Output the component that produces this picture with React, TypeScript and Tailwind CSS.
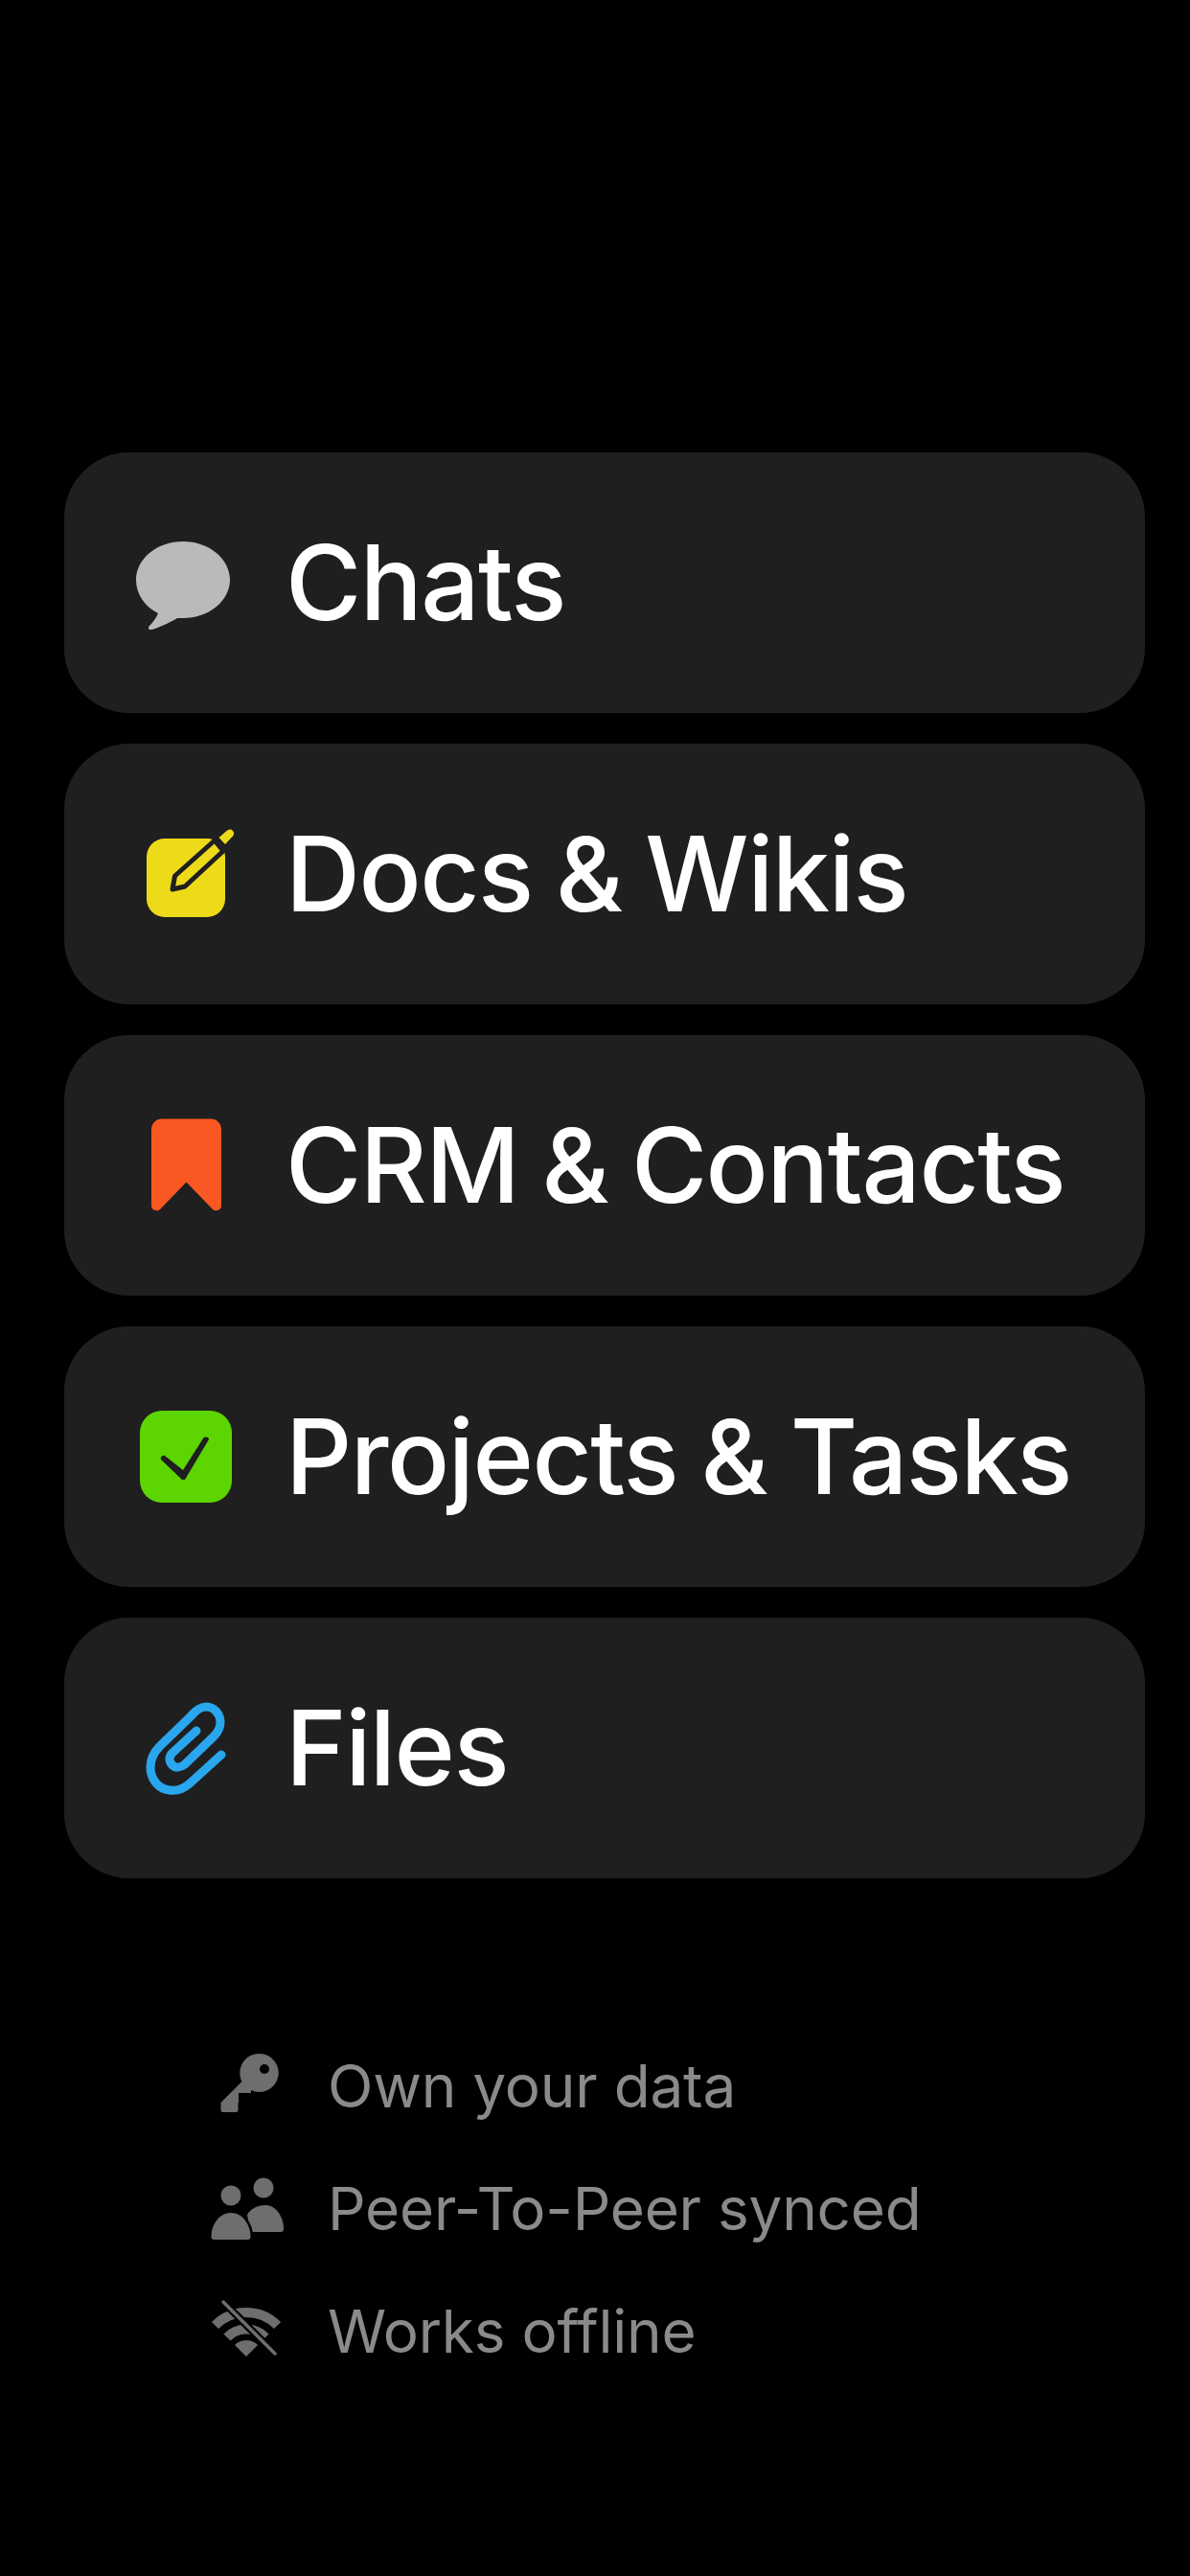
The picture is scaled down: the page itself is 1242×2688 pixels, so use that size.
const ChatIcon = () => (
  <svg viewBox="138 552 112 112" className="w-[112px] h-[112px]">
    <path
      fill="#bababa"
      d="M191 565c27 0 49 18 49 40s-22 40-49 40h-6c-8 5-22 11-27 12-3 .5-4-2-2-4 3-3 7-8 9-13-14-7-23-20-23-35 0-22 22-40 49-40z"
    />
  </svg>
);

const DocIcon = () => (
  <svg viewBox="138 857 112 112" className="w-[112px] h-[112px]">
    <rect x="153" y="876" width="82" height="82" rx="19" fill="#eddb19" />
    <path
      d="M180 929l2.500-14L224 878l9 11-40 37z"
      fill="#eddb19"
      stroke="#1f1f1f"
      strokeWidth="5"
      strokeLinejoin="round"
    />
    <path d="M228.500 875l8-7c3-2 5-2 6.500 0s1.500 3.500 0 5.500l-8 8.500z" fill="#eddb19" />
  </svg>
);

const BookmarkIcon = () => (
  <svg viewBox="138 1161 112 112" className="w-[112px] h-[112px]">
    <path
      fill="#f95823"
      d="M158 1180c0-7 5-11.500 11-11.500h51c6 0 11 4.500 11 11.500v79c0 5-6 6.500-9 4l-27.500-28.500-27.500 28.500c-3 2.500-9 1-9-4z"
    />
  </svg>
);

const CheckIcon = () => (
  <svg viewBox="138 1465 112 112" className="w-[112px] h-[112px]">
    <rect x="146" y="1473" width="96" height="96" rx="23" fill="#5cd500" />
    <path
      fill="#1f1f1f"
      d="M168 1524c-1-2 1-5 4-4l19 15 21-33c1-2 6-2 6 1l-25 42h-3z"
    />
  </svg>
);

const ClipIcon = () => (
  <svg viewBox="138 1769 112 112" className="w-[112px] h-[112px]">
    <path
      d="M231 1832L198 1862C190 1869 183 1870 177 1869C165 1868 157 1857 157 1845C157 1836 161 1829 167 1823L199 1792C204 1786 210 1782 215 1782C224 1782 230 1790 230 1798C230 1804 227 1809 223 1813L193 1842C188 1846 183 1846 180 1843C176 1839 176 1834 180 1830L205 1807"
      fill="none"
      stroke="#2aa6ee"
      strokeWidth="9"
      strokeLinecap="round"
      strokeLinejoin="round"
    />
  </svg>
);

const KeyIcon = () => (
  <svg viewBox="218 2136 80 80" className="w-[80px] h-[80px]">
    <path
      fill="#6e6e6e"
      fillRule="evenodd"
      d="M271 2144a20 20 0 1 1-9 38v3h-13v10h-.500v8c0 1-1 2-2 2h-14c-1 0-2-1-2-2v-8l22-22a20 20 0 0 1 18.500-29zm5 11a5 5 0 1 0 0 10 5 5 0 0 0 0-10z"
    />
  </svg>
);

const PeopleIcon = () => (
  <svg viewBox="218 2264 80 80" className="w-[80px] h-[80px]">
    <circle cx="275" cy="2284" r="10.500" fill="#6e6e6e" />
    <path
      fill="#6e6e6e"
      d="M258 2312c3-6 11-10 19-10 11 0 19 12 19 25 0 2-1 3-3 3h-32z"
    />
    <circle cx="241" cy="2292" r="10.500" fill="#6e6e6e" />
    <path
      fill="#6e6e6e"
      stroke="#000000"
      strokeWidth="5"
      paintOrder="stroke"
      d="M241 2310c12 0 20.500 12 20.500 25 0 2-1 3-3 3h-35c-2 0-3-1-3-3 0-13 8.500-25 20.500-25z"
    />
  </svg>
);

const OfflineIcon = () => (
  <svg viewBox="218 2392 80 80" className="w-[80px] h-[80px]">
    <g fill="none" stroke="#6e6e6e" strokeWidth="10">
      <path d="M224.500 2427.500a46 46 0 0 1 65 0" />
      <path d="M237 2440a28 28 0 0 1 40 0" />
    </g>
    <path fill="#6e6e6e" d="M257 2460l-12-12a17 17 0 0 1 24 0z" />
    <path d="M233 2403l54 54" stroke="#000000" strokeWidth="8" />
    <path d="M233 2403l54 54" stroke="#6e6e6e" strokeWidth="3.500" strokeLinecap="round" />
  </svg>
);

const features = [
  { label: "Chats", icon: <ChatIcon /> },
  { label: "Docs & Wikis", icon: <DocIcon /> },
  { label: "CRM & Contacts", icon: <BookmarkIcon /> },
  { label: "Projects & Tasks", icon: <CheckIcon /> },
  { label: "Files", icon: <ClipIcon /> },
];

const perks = [
  { label: "Own your data", icon: <KeyIcon /> },
  { label: "Peer-To-Peer synced", icon: <PeopleIcon /> },
  { label: "Works offline", icon: <OfflineIcon /> },
];

export default function App() {
  return (
    <div className="min-h-[2688px] bg-black pt-[472px] pl-[67px] font-['Inter',sans-serif]">
      <div className="flex flex-col gap-[32px] w-[1128px]">
        {features.map((feature) => (
          <div
            key={feature.label}
            className="flex items-center h-[272px] pl-[71px] gap-[48px] bg-[#1f1f1f] rounded-[68px]"
          >
            {feature.icon}
            <span className="text-[108px] leading-none font-medium tracking-[-1.5px] [word-spacing:-3px] text-white">
              {feature.label}
            </span>
          </div>
        ))}
      </div>
      <div className="flex flex-col gap-[48px] mt-[175px] pl-[151px]">
        {perks.map((perk) => (
          <div key={perk.label} className="flex items-center h-[80px] gap-[44px]">
            {perk.icon}
            <span className="text-[62px] leading-none text-[#8a8a8a] tracking-[-0.2px] translate-y-[2px]">
              {perk.label}
            </span>
          </div>
        ))}
      </div>
    </div>
  );
}
